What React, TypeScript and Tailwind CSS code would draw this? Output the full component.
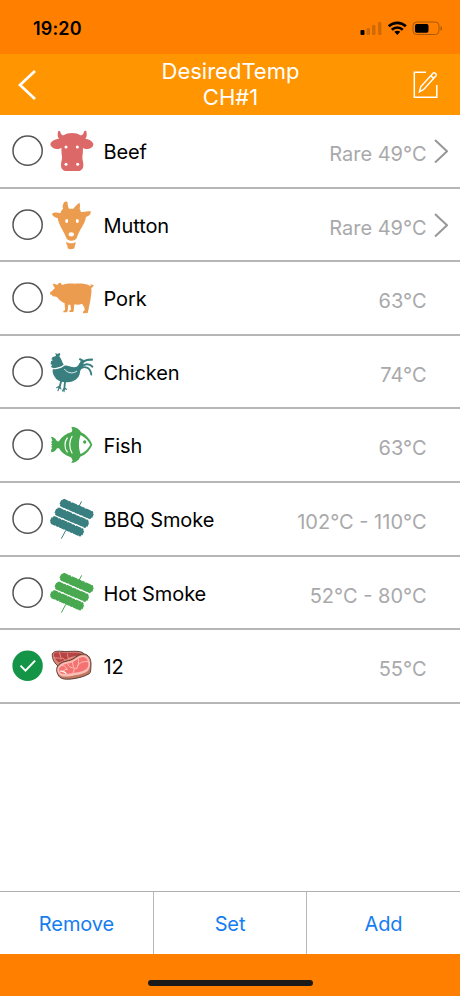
import { type ReactNode } from "react";

const BeefIcon = () => (
  <svg viewBox="147 0 138 219" className="w-[46px] h-[73px]">
    <path
      fill="#dc6868"
      d="M175 48C178 46 181 49 182 53C183 58 186 61 191 61C198 56 207 54 216 54C226 54 235 56 241 61C246 61 250 58 251 53C252 48 256 46 259 49C261 56 261 66 256 72C266 72 276 77 280 86C281 93 275 99 267 101C259 103 252 101 249 98C249 108 248 118 247 127C247 135 250 141 250 150C250 162 243 168 234 168H200C190 168 183 162 183 150C183 141 186 135 186 127C185 118 184 108 184 98C179 102 172 103 165 101C157 99 151 93 151 87C155 77 166 72 177 72C172 66 172 56 175 48Z"
    />
    <g fill="#fff">
      <circle cx="198" cy="96" r="4.5" />
      <circle cx="232" cy="96" r="4.5" />
      <circle cx="198" cy="148" r="4.5" />
      <circle cx="233" cy="148" r="4.5" />
    </g>
  </svg>
);

const MuttonIcon = () => (
  <svg viewBox="147 2 138 219" className="w-[46px] h-[73px]">
    <g fill="#eb9c4f">
      <path d="M193 41C197 38 203 39 203 45C203 52 205 58 207 61H220C225 54 232 48 238 43C241 48 240 55 239 61L243 71C253 72 263 69 272 69C274 76 267 84 258 86C256 101 248 112 241 124C236 133 233 141 230 149C227 155 221 157 214 157C207 157 201 155 199 149C196 141 192 133 187 124C180 112 175 101 173 89C164 88 157 82 156 76C163 71 173 72 181 75C182 70 184 66 189 62C187 54 188 48 193 41Z" />
      <path d="M199 160C207 166 219 167 227 161C227 167 224 174 223 180C219 183 209 184 203 180C203 172 201 168 199 166Z" />
    </g>
    <g fill="#fff">
      <ellipse cx="200" cy="98" rx="4.5" ry="6" />
      <ellipse cx="232" cy="98" rx="4.5" ry="6" />
      <ellipse cx="214" cy="138" rx="8" ry="6.5" />
    </g>
  </svg>
);

const PorkIcon = () => (
  <svg viewBox="147 0 138 219" className="w-[46px] h-[73px]">
    <path
      fill="#eb9c4f"
      d="M159 65C164 65 169 67 172 69C173 65 177 63 182 62L186 69C198 65 211 64 225 65C242 64 258 65 269 71C273 74 274 70 271 68C272 65 275 66 275 69L281 68C281 73 277 76 274 77C276 91 272 105 271 115C270 124 267 131 266 140L263 153L249 154V149L254 145C255 137 250 131 246 125C240 128 232 129 223 127L221 147L219 150H208V146L213 143L211 128H205L203 147L200 151H190V147L195 144L194 124C185 120 177 114 172 106C167 103 161 104 157 103L156 98L151 98L150 91C156 88 161 82 165 78C161 74 159 69 159 65Z"
    />
  </svg>
);

const ChickenIcon = () => (
  <svg viewBox="147 2 138 219" className="w-[46px] h-[73px]">
    <g fill="#397f80">
      <path d="M166 53L172 56L179 53L181 57L178 63C184 70 186 80 191 88C183 95 172 96 161 99C157 96 154 98 153 93L157 90L152 86L153 78L159 74L154 72L158 65L168 62Z" />
      <path d="M158 102C171 102 184 99 193 91C202 89 210 94 218 95C225 97 231 95 235 90C238 83 244 76 249 72C254 75 250 86 248 94C244 101 240 104 240 111C238 130 222 140 203 141C185 140 172 137 166 127C160 120 157 112 158 102Z" />
    </g>
    <path d="M193 101C201 113 218 117 231 107" fill="none" stroke="#fff" strokeWidth="2.5" />
    <g fill="none" stroke="#397f80" strokeLinecap="round">
      <path d="M240 92C245 80 249 75 240 72M242 91C247 77 260 72 276 73" strokeWidth="6.5" />
      <path d="M243 96C252 85 268 83 277 94" strokeWidth="6" />
      <path d="M239 101C253 91 271 94 274 118" strokeWidth="5.5" />
      <path d="M184 136L178 157M195 138L193 161" strokeWidth="5.5" />
      <path d="M178 153L170 157M178 155L174 166M179 154L183 161M193 158L187 167M193 158L199 162M193 158L192 169" strokeWidth="3.5" />
    </g>
  </svg>
);

const FishIcon = () => (
  <svg viewBox="147 1 138 219" className="w-[46px] h-[73px]">
    <path
      fill="#48a950"
      d="M153 84C162 85 168 91 171 98H177C184 85 197 75 215 70L217 63L214 55C228 54 239 62 243 71C258 78 270 91 277 108C270 124 258 137 241 144C236 156 226 162 214 163L218 155L213 146C197 141 184 132 177 119H171C168 126 162 131 154 131L153 123L157 118L153 115L157 111L153 108L157 104L153 100L157 96Z"
    />
    <path fill="#fff" d="M242 79C255 86 266 97 271 108C265 120 255 130 242 136C235 120 235 96 242 79Z" />
    <circle cx="254" cy="100" r="5" fill="#48a950" />
    <g fill="none" stroke="#fff" strokeWidth="3.5" strokeLinecap="round">
      <path d="M202 88c-9 10-10 31 0 42" />
      <path d="M216 83c-9 14-9 35 0 50" />
    </g>
  </svg>
);

const SkewerIcon = ({ color }: { color: string }) => (
  <svg viewBox="147 0 138 219" className="w-[46px] h-[73px]" fill="none" stroke={color}>
    <path d="M245 55L237 70M197 143L184 167" strokeWidth="3" />
    {/* meat, with a dashed layer for the rough edges */}
    <path d="M184 58L276 98M169 84L262 124M155 110L247 150" strokeWidth="22.5" />
    <path d="M187 59L274 97M172 85L260 123M158 111L245 149" strokeWidth="25.5" strokeDasharray="13 2 8 3 17 2" />
    <path d="M181 57L279 99M166 83L265 125M152 109L250 151" strokeWidth="13" />
  </svg>
);

const SteakIcon = () => (
  <svg viewBox="147 0 138 219" className="w-[46px] h-[73px]">
    <path
      d="M157 72c3-9 17-9 29-8 21 2 50-4 64 5 8 7-14 19-39 25-15 4-26 17-35 15-11-6-21-23-19-37z"
      fill="#d98674"
      stroke="#4b2b2b"
      strokeWidth="2.5"
    />
    <path d="M163 70c9-5 20-3 33-2 18 2 36-3 47 3-9 8-23 9-37 14-13 4-25 15-32 10-8-7-15-17-11-25z" fill="#b84446" />
    <path d="M161 83c11 2 16-1 23 5M178 67l5 18c9-1 11 3 13 7M202 71l3 15c8-4 17-7 27-5" fill="none" stroke="#ed9a8b" strokeWidth="2.5" />
    <path
      d="M171 112c4-11 19-18 34-20 17-3 27-20 45-20 15 0 24 13 23 34-1 13 0 21-5 25-16 9-31 13-53 16-22 2-35 0-41-13-4-7-5-14-3-22z"
      fill="#c07a60"
      stroke="#4b2b2b"
      strokeWidth="2.5"
    />
    <path
      d="M173 114c5-11 18-17 34-20 17-3 25-18 43-18 14 1 22 15 20 31-2 17-15 23-35 27-20 4-46 10-57 0-5-5-8-13-5-20z"
      fill="#fbbdb5"
    />
    <path
      d="M178 115c6-10 18-13 32-16 16-3 24-17 39-18 11 1 17 11 16 24-1 13-13 18-31 22-19 3-42 9-52 2-4-4-6-9-4-14z"
      fill="#f47272"
    />
    <path d="M181 108c12-4 16 2 20 10M203 101c3 12 13 13 29 14M217 96l4 16M235 87c1 10 2 17-5 28M232 107c10-10 15-13 32-12M224 116l-5 13M203 117l-13 4" fill="none" stroke="#ffc0b8" strokeWidth="3" />
    <path d="M181 123c9 1 16 2 17 9" fill="none" stroke="#fff2eb" strokeWidth="4" />
  </svg>
);

type Food = { name: string; temp: string; icon: ReactNode; more?: boolean; selected?: boolean };

const FOODS: Food[] = [
  { name: "Beef", temp: "Rare 49°C", icon: <BeefIcon />, more: true },
  { name: "Mutton", temp: "Rare 49°C", icon: <MuttonIcon />, more: true },
  { name: "Pork", temp: "63°C", icon: <PorkIcon /> },
  { name: "Chicken", temp: "74°C", icon: <ChickenIcon /> },
  { name: "Fish", temp: "63°C", icon: <FishIcon /> },
  { name: "BBQ Smoke", temp: "102°C - 110°C", icon: <SkewerIcon color="#397f80" /> },
  { name: "Hot Smoke", temp: "52°C - 80°C", icon: <SkewerIcon color="#48a950" /> },
  { name: "12", temp: "55°C", icon: <SteakIcon />, selected: true },
];

function StatusBar() {
  return (
    <div className="flex h-[54px] items-center justify-between bg-[#ff8000] pl-[33px] pr-[17px] pt-[3px]">
      <span className="text-[18px] font-semibold tracking-[0.15px]">19:20</span>
      <svg viewBox="0 0 83 16" className="h-4 w-[83px]">
        <rect x="0.5" y="9" width="4" height="5" rx="1" />
        <g fill="#cf6a06">
          <rect x="6.5" y="7" width="3.5" height="7" rx="1" />
          <rect x="12" y="4" width="3.5" height="10" rx="1" />
          <rect x="18" y="1" width="3.5" height="13" rx="1" />
        </g>
        <g fill="none" stroke="#000" strokeWidth="2.6">
          <path d="M28.7 5.3c5-4.6 12.3-4.6 17.2 0" />
          <path d="M31.8 8.7c3.2-3 7.8-3 11 0" />
        </g>
        <path d="M34.3 10.8c1.8-1.5 4.2-1.5 6 0l-3 3.2z" />
        <rect x="53" y="1" width="26" height="12.5" rx="3.7" fill="none" stroke="#a8590c" />
        <rect x="55" y="3" width="13.5" height="8.7" rx="1.7" />
        <path d="M80.5 5c2 .6 2 4.2 0 4.8z" fill="#a8590c" />
      </svg>
    </div>
  );
}

function NavBar() {
  return (
    <header className="flex h-[61px] items-center justify-between bg-[#ff9500] pl-[17px] pr-[21px] text-white">
      <button className="w-[31px]" aria-label="Back">
        <svg viewBox="0 0 20 32" className="h-8 w-5" fill="none" stroke="currentColor" strokeWidth="2.7">
          <path d="M18 2L3 16l15 14" />
        </svg>
      </button>
      <h1 className="pb-[2px] text-center text-[22px] leading-[26px]">
        DesiredTemp
        <br />
        CH#1
      </h1>
      <button aria-label="Edit">
        <svg viewBox="0 0 26 28" className="h-7 w-[26px]" fill="none" stroke="currentColor" strokeWidth="1.5">
          <path d="M13 1.3H1.3v25h22.5V14" />
          <path d="M6.5 20.8l1.2-5L20 2.2q1.2-1 2.4.1l.4.4q1 1 0 2.2L10.7 18.5zM17.7 4.6l2.9 2.8" />
        </svg>
      </button>
    </header>
  );
}

function FoodRow({ food }: { food: Food }) {
  return (
    <li className="flex h-[73.6px] items-start border-b-2 border-[#b6b6b8] pl-3">
      <svg viewBox="0 0 32 32" className="mt-5 size-8 shrink-0">
        {food.selected ? (
          <>
            <circle cx="15.6" cy="15.7" r="15.2" fill="#149447" />
            <path d="M8.5 15.6l5 5 9.6-10" fill="none" stroke="#fff" strokeWidth="2" />
          </>
        ) : (
          <circle cx="15.6" cy="15.7" r="14.6" fill="none" stroke="#555557" strokeWidth="1.5" />
        )}
      </svg>
      <div className="ml-[5px] h-[71px] shrink-0">{food.icon}</div>
      <span className="ml-[8.5px] mt-[22px] text-[20px] leading-[30px] tracking-[-0.1px]">{food.name}</span>
      <span className="ml-auto mt-6 text-[20px] leading-[30px] text-[#a9a9ab]">{food.temp}</span>
      <div className="ml-[7.5px] mt-6 w-[26px]">
        {food.more && (
          <svg viewBox="0 0 14 26" className="h-[26px] w-3.5" fill="none" stroke="#98989a" strokeWidth="2">
            <path d="M1 1l12 11.2L1 23.5" />
          </svg>
        )}
      </div>
    </li>
  );
}

export default function App() {
  return (
    <div className="flex h-[996px] w-[460px] flex-col bg-white font-['Inter','Liberation_Sans',sans-serif] text-black">
      <StatusBar />
      <NavBar />
      <ul className="flex-1">
        {FOODS.map((food) => (
          <FoodRow key={food.name} food={food} />
        ))}
      </ul>
      <div className="grid h-[63px] grid-cols-[154px_153px_1fr] border-t border-[#b0b0b2] text-[20px] tracking-[-0.1px] text-[#147df0]">
        <button className="border-r border-[#b8b8ba] pt-px">Remove</button>
        <button className="border-r border-[#b8b8ba] pt-px">Set</button>
        <button className="pt-px">Add</button>
      </div>
      <footer className="flex h-[42px] items-end justify-center bg-[#ff8000] pb-[10px]">
        <div className="h-1.5 w-[165px] rounded-full bg-[#1a1a1a]" />
      </footer>
    </div>
  );
}
